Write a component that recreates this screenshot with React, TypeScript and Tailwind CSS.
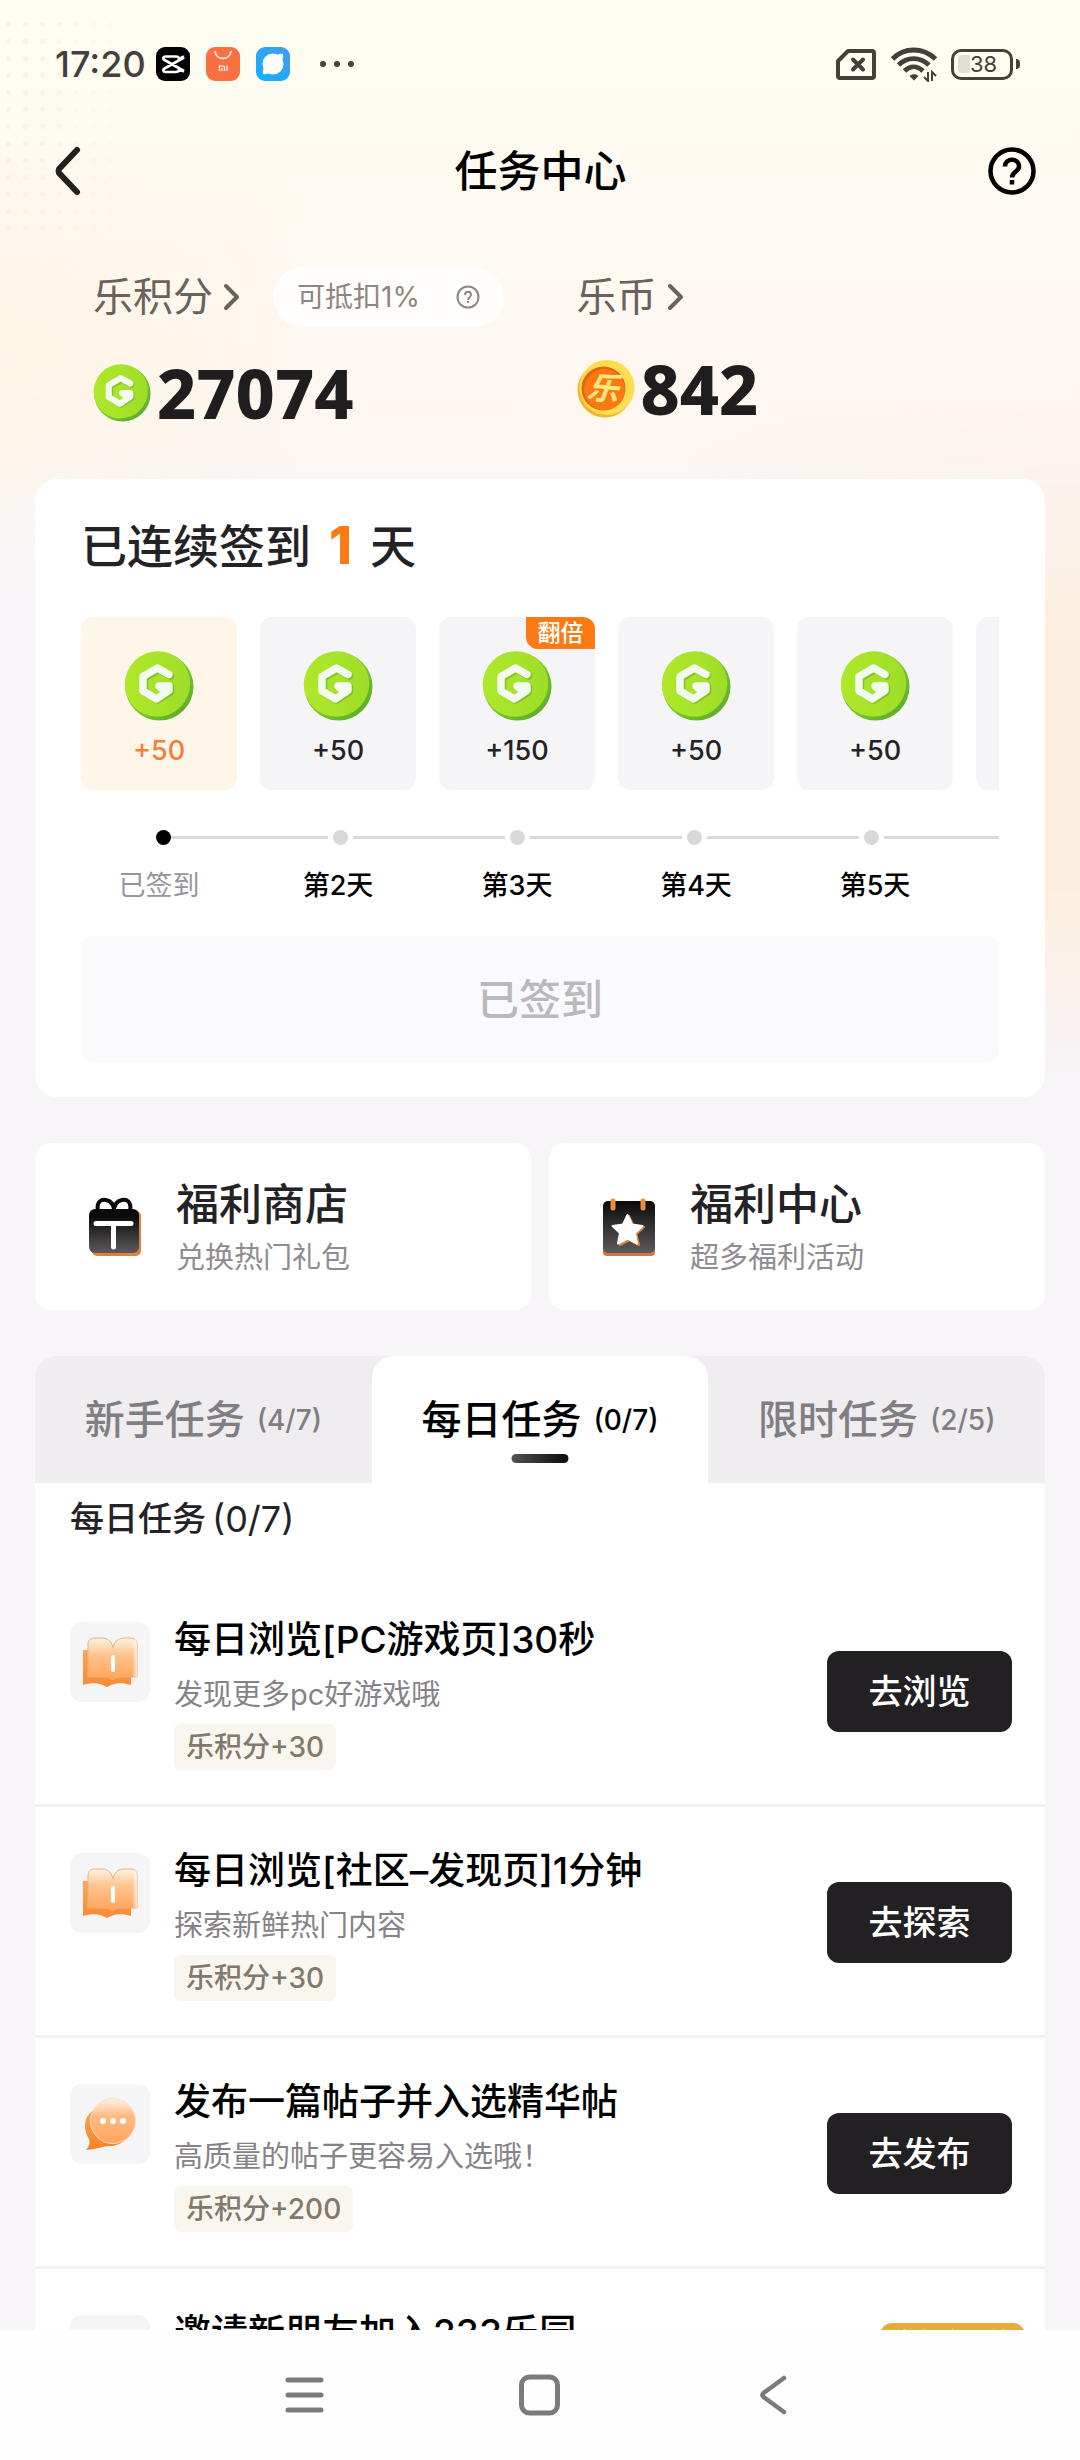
// Task center: point balances, the daily check-in strip, welfare shortcuts
// and the tabbed list of tasks, framed by the phone's status and nav bars.

import type { ReactNode } from 'react';

type TaskIcon = 'book' | 'chat' | 'none';

interface Task {
  icon: TaskIcon;
  title: string;
  blurb: string;
  reward: string;
  action: string;
}

const DAYS = [
  { label: '已签到', amount: '+50',  done: true,  double: false },
  { label: '第2天',  amount: '+50',  done: false, double: false },
  { label: '第3天',  amount: '+150', done: false, double: true },
  { label: '第4天',  amount: '+50',  done: false, double: false },
  { label: '第5天',  amount: '+50',  done: false, double: false },
];

const TABS = [
  { name: '新手任务', count: '(4/7)', active: false },
  { name: '每日任务', count: '(0/7)', active: true },
  { name: '限时任务', count: '(2/5)', active: false },
];

const TASKS: Task[] = [
  { icon: 'book', title: '每日浏览[PC游戏页]30秒',     blurb: '发现更多pc好游戏哦',         reward: '乐积分+30',  action: '去浏览' },
  { icon: 'book', title: '每日浏览[社区–发现页]1分钟', blurb: '探索新鲜热门内容',           reward: '乐积分+30',  action: '去探索' },
  { icon: 'chat', title: '发布一篇帖子并入选精华帖',   blurb: '高质量的帖子更容易入选哦！', reward: '乐积分+200', action: '去发布' },
];

function GreenCoin({ className }: { className: string }) {
  return (
    <svg viewBox="0 0 70 70" className={className} aria-hidden="true">
      <defs>
        <linearGradient id="coinSide" x1="0" y1="0" x2="1" y2="1">
          <stop offset="0.15" stopColor="#4a9420" />
          <stop offset="0.5" stopColor="#7cc82a" />
          <stop offset="0.85" stopColor="#5fb02c" />
          <stop offset="1" stopColor="#8ad848" />
        </linearGradient>
        <linearGradient id="coinFace" x1="0" y1="0" x2="1" y2="1">
          <stop offset="0" stopColor="#b2ea2a" />
          <stop offset="1" stopColor="#9bdc28" />
        </linearGradient>
      </defs>
      <circle cx="35.500" cy="35.500" r="34" fill="url(#coinSide)" />
      <ellipse cx="33.500" cy="33" rx="33" ry="32.500" fill="url(#coinFace)" transform="rotate(-45 33.500 33)" />
      <g fill="none" strokeWidth="7.500" strokeLinejoin="round" strokeLinecap="round">
        <path d="M46.500 25 L35 18.500 L20.500 27 V41 L33.500 49 L46.500 41 V36 H36.500 L38 38" stroke="#6fa821" opacity="0.6" />
        <path d="M45 23.500 L33.500 17 L19 25.500 V40 L32.500 48 L45 39.500 V35 H35 L37 37" stroke="#f3faf0" />
      </g>
    </svg>
  );
}

function GoldCoin() {
  return (
    <span className="relative flex h-[58px] w-[58px] items-center justify-center">
      <svg viewBox="0 0 58 58" className="absolute inset-0 h-full w-full" aria-hidden="true">
        <circle cx="28" cy="30" r="27.500" fill="#f3b52f" />
        <circle cx="30" cy="27.500" r="27.500" fill="#ffdc50" />
        <circle cx="26.500" cy="28.500" r="22" fill="#e2640c" />
        <circle cx="27.500" cy="29.500" r="20.500" fill="#fb7a10" />
      </svg>
      <span className="relative rotate-6 pr-1 text-[32px] leading-8 font-bold text-[#ffe384] italic">乐</span>
    </span>
  );
}

function Chevron() {
  return (
    <svg viewBox="0 0 18 28" className="h-7 w-[18px]" fill="none" stroke="currentColor" strokeWidth="4" strokeLinecap="round" strokeLinejoin="round" aria-hidden="true">
      <path d="M3 3 L14 14 L3 25" />
    </svg>
  );
}

function GiftIcon() {
  return (
    <svg viewBox="0 0 54 60" className="h-[60px] w-[54px]" aria-hidden="true">
      <defs>
        <linearGradient id="giftBody" x1="0" y1="0" x2="0" y2="1">
          <stop offset="0.15" stopColor="#0b0a0b" />
          <stop offset="1" stopColor="#5c5a5b" />
        </linearGradient>
      </defs>
      <rect x="4" y="14" width="49" height="45" rx="5" fill="#e0823c" />
      <path d="M10 14 C8 4 14 2 18 3 C23 4 26 8 26 14 C26 8 29 4 34 3 C38 2 44 4 42 14" fill="none" stroke="#0b0a0b" strokeWidth="4" />
      <rect x="1" y="12" width="50" height="44" rx="6" fill="url(#giftBody)" />
      <path d="M8 26.500 H43 M25.500 27 V50" stroke="#fff" strokeWidth="5" strokeLinecap="round" />
    </svg>
  );
}

function CalendarStarIcon() {
  return (
    <svg viewBox="0 0 54 60" className="h-[60px] w-[54px]" aria-hidden="true">
      <defs>
        <linearGradient id="calBody" x1="0" y1="0" x2="0" y2="1">
          <stop offset="0" stopColor="#0b0a0b" />
          <stop offset="1" stopColor="#5c5a5b" />
        </linearGradient>
      </defs>
      <rect x="1" y="12" width="52" height="47" rx="4" fill="#d27540" />
      <rect x="1" y="4" width="52" height="52" rx="5" fill="url(#calBody)" />
      <path d="M11 4 V11 M41 4 V11" stroke="#f08a3c" strokeWidth="5" strokeLinecap="round" />
      <path
        d="M27 19 L31.500 28.500 L42 30 L34.500 37 L37 48 L27.500 43 L18 48 L20 37 L12 30 L22 28.500 Z"
        fill="#e0823c" stroke="#e0823c" strokeWidth="2" strokeLinejoin="round"
      />
      <path
        d="M25.500 18 L30 27.500 L40.500 29 L33 36 L35 46.500 L25.500 41.500 L16 46.500 L18 36 L10.500 29 L21 27.500 Z"
        fill="#fff" stroke="#fff" strokeWidth="2" strokeLinejoin="round"
      />
    </svg>
  );
}

function BookIcon() {
  return (
    <svg viewBox="0 0 56 52" className="h-[52px] w-14" aria-hidden="true">
      <defs>
        <linearGradient id="bookBack" x1="0" y1="0" x2="0" y2="1">
          <stop offset="0" stopColor="#fda55a" />
          <stop offset="1" stopColor="#f98a35" />
        </linearGradient>
        <linearGradient id="bookFront" x1="0" y1="0" x2="0" y2="1">
          <stop offset="0" stopColor="#fff3e6" />
          <stop offset="0.4" stopColor="#ffc48f" />
          <stop offset="1" stopColor="#ffa357" />
        </linearGradient>
        <linearGradient id="bookEdge" x1="0" y1="0" x2="1" y2="0">
          <stop offset="0.8" stopColor="#fff" stopOpacity="0" />
          <stop offset="1" stopColor="#fff" stopOpacity="0.7" />
        </linearGradient>
      </defs>
      <path d="M1 14 H49 V49 C40 46 31 47 25 51 C19 47 10 46 1 49 Z" fill="url(#bookBack)" />
      <path
        d="M6 8 C6 4 9 2 13 2 H20 C26 2 30 6 31 12 C32 6 36 2 42 2 H48 C52 2 55 4 55 8 V41 H40 C36 41 33 42 31 44 C29 42 26 41 22 41 H6 Z"
        fill="url(#bookFront)" stroke="#e9b27e" strokeWidth="1"
      />
      <path d="M31 12 C32 6 36 2 42 2 H48 C52 2 55 4 55 8 V41 H40 C36 41 33 42 31 44 Z" fill="url(#bookEdge)" />
      <path d="M31 21 V34" stroke="#fff" strokeWidth="4" strokeLinecap="round" />
    </svg>
  );
}

function ChatIcon() {
  return (
    <svg viewBox="0 0 56 56" className="h-14 w-14" aria-hidden="true">
      <defs>
        <linearGradient id="chatBack" x1="0" y1="0" x2="0" y2="1">
          <stop offset="0" stopColor="#ffa65a" />
          <stop offset="1" stopColor="#f58128" />
        </linearGradient>
        <linearGradient id="chatFront" x1="0" y1="0" x2="0" y2="1">
          <stop offset="0" stopColor="#fff3e6" />
          <stop offset="0.4" stopColor="#ffba80" />
          <stop offset="1" stopColor="#ffa65e" />
        </linearGradient>
      </defs>
      <path d="M26 10 C40 10 49 19 49 30 C49 42 40 50 27 50 C20 50 17 53 4 54 C8 50 8 46 7 43 C4 38 3 34 3 30 C3 18 13 10 26 10 Z" fill="url(#chatBack)" />
      <circle cx="31" cy="25" r="22.500" fill="url(#chatFront)" stroke="#fde0c2" strokeWidth="1" />
      <g fill="#fff">
        <circle cx="21" cy="25" r="3" />
        <circle cx="31" cy="25" r="3" />
        <circle cx="41" cy="25" r="3" />
      </g>
    </svg>
  );
}

function StatusBar() {
  return (
    <div className="flex h-10 items-center justify-between pr-15 pl-[55px] text-[#45403a]">
      <div className="flex items-center">
        <span className="text-[36px] leading-10 font-medium">17:20</span>
        <div className="ml-2.5 flex items-center gap-4">
          <svg viewBox="0 0 34 34" className="h-[34px] w-[34px]" aria-hidden="true">
            <rect width="34" height="34" rx="9" fill="#000" />
            <path d="M28 9.500 L23 12 C23 10 22 9.500 20 9.500 H9.500 C7 9.500 6.500 12 8.500 13 L28 24 M28 24.500 L23 22 C23 24 22 25 20 25 H9.500 C7 25 6.500 22.500 8.500 21.500 L28 10.500" fill="none" stroke="#fff" strokeWidth="2.600" strokeLinejoin="round" />
          </svg>
          <svg viewBox="0 0 34 34" className="h-[34px] w-[34px]" aria-hidden="true">
            <rect width="34" height="34" rx="9" fill="#fb7040" />
            <path d="M9 4 C10 14 24 14 25 4" fill="none" stroke="#ffe9df" strokeWidth="1.800" />
            <path d="M13.500 24 V19 H17 Q18.500 19 18.500 20.500 V24 M21 18.500 V24 M16 21 V24" fill="none" stroke="#fff" strokeWidth="1.200" />
          </svg>
          <svg viewBox="0 0 34 34" className="h-[34px] w-[34px]" aria-hidden="true">
            <defs>
              <linearGradient id="browser" x1="1" y1="0" x2="0" y2="1">
                <stop offset="0" stopColor="#459bea" />
                <stop offset="1" stopColor="#12b0ff" />
              </linearGradient>
            </defs>
            <rect width="34" height="34" rx="9" fill="url(#browser)" />
            <circle cx="17" cy="17" r="10.500" fill="#fff" />
            <path d="M27 7 C25 6.500 23 7 21.500 7.800 L26.300 12.500 C27 11 27.500 9 27 7 Z M7 27 C9 27.500 11 27 12.500 26.300 L7.800 21.500 C7 23 6.500 25 7 27 Z" fill="#fff" />
          </svg>
        </div>
        <svg viewBox="0 0 36 8" className="ml-[29px] h-2 w-9" fill="currentColor" aria-hidden="true">
          <circle cx="4" cy="4" r="3" />
          <circle cx="18" cy="4" r="3" />
          <circle cx="32" cy="4" r="3" />
        </svg>
      </div>
      <div className="flex items-center gap-3.5">
        <svg viewBox="0 0 42 34" className="h-[34px] w-[42px]" fill="none" stroke="currentColor" strokeWidth="4" strokeLinejoin="round" aria-hidden="true">
          <path d="M13 4 H37 Q39 4 39 6 V29 Q39 31 37 31 H5 Q3 31 3 29 V14 Z" />
          <path d="M18 12.500 L28 22.500 M28 12.500 L18 22.500" strokeLinecap="round" />
        </svg>
        <svg viewBox="0 0 46 36" className="h-9 w-[46px]" fill="none" stroke="currentColor" strokeWidth="4.800" aria-hidden="true">
          <path d="M1.500 13 C13 1 32 1 44.500 13" />
          <path d="M7.500 19 C16 10.500 29 10.500 38 19" />
          <path d="M13.500 25 C19 19.500 26 19.500 32 25" />
          <path d="M18.500 30 C21 27.500 25 27.500 27.500 30 L23 34.500 Z" fill="currentColor" stroke="none" />
          <path d="M37 26 V35 L33 31 M41 35 V26 L45 30" strokeWidth="2" />
        </svg>
        <span className="flex items-center gap-[3px]">
          <span className="flex h-[31px] w-[62px] items-center rounded-[10px] border-[3px] border-current p-1">
            <span className="h-4.5 w-3 rounded-l-[4px] bg-[#e2ded6]" />
            <span className="text-[22px] leading-5 font-normal">38</span>
          </span>
          <span className="h-2.5 w-1 rounded-r-sm bg-current" />
        </span>
      </div>
    </div>
  );
}

function Balance({ name, coin, value, gap, children }: { name: string; coin: ReactNode; value: string; gap: string; children?: ReactNode }) {
  return (
    <div className={`flex flex-1 flex-col ${gap}`}>
      <div className="flex h-16 items-center">
        <a href="#detail" className="flex items-center gap-2.5 text-[40px] leading-[48px] text-[#6a625b]">
          {name}
          <Chevron />
        </a>
        {children}
      </div>
      <div className="flex h-16 items-center gap-1.5">
        {coin}
        <span className="font-['Noto_Sans','Noto_Sans_CJK_SC',sans-serif] text-[68px] leading-[64px] font-extrabold text-[#1f1d1d]">
          {value}
        </span>
      </div>
    </div>
  );
}

function CheckIn() {
  return (
    <section className="rounded-[22px] bg-white px-[46px] pt-[39px] pb-[35px]">
      <h2 className="flex h-14 items-center gap-[18px] text-[46px] font-medium text-[#252226]">
        已连续签到
        <strong className="text-[52px] font-extrabold text-[#fb7a14]">1</strong>
        天
      </h2>

      <div className="mt-[43px] overflow-hidden">
        <ol className="flex gap-[23px]">
          {DAYS.map(({ label, amount, done, double }) => (
            <li
              key={label}
              className={`relative flex h-[173px] w-[156px] shrink-0 flex-col items-center gap-3 rounded-xl pt-[34px] ${done ? 'bg-[#fef6e8]' : 'bg-[#f5f4f7]'}`}
            >
              <GreenCoin className="h-[70px] w-[70px]" />
              <span className={`text-[27px] leading-9 font-medium ${done ? 'text-[#f0803a]' : 'text-[#252226]'}`}>
                {amount}
              </span>
              {double && (
                <span className="absolute top-0 right-0 flex h-8 w-[69px] items-center justify-center rounded-tr-xl rounded-bl-xl bg-[#fb7a14] text-[23px] font-medium text-white">
                  翻倍
                </span>
              )}
            </li>
          ))}
          {/* next day peeks in at the right edge */}
          <li className="h-[173px] w-[156px] shrink-0 rounded-xl bg-[#f5f4f7]" />
        </ol>

        {/* Progress line */}
        <div className="mt-10 flex pl-[75px]" aria-hidden="true">
          {DAYS.map(({ label, done }) => (
            <span key={label} className="flex w-[177px] shrink-0 items-center">
              <span className={`h-[15px] w-[15px] rounded-full ${done ? 'bg-black' : 'bg-[#d9d7da]'}`} />
              <span className={`mr-[5px] h-[3px] flex-1 bg-[#dad8db] ${done ? '' : 'ml-[5px]'}`} />
            </span>
          ))}
        </div>

        <div className="mt-[25px] flex gap-[23px]">
          {DAYS.map(({ label, done }) => (
            <span
              key={label}
              className={`w-[156px] shrink-0 text-center text-[27px] leading-8 ${done ? 'text-[#98969a]' : 'font-medium text-black'}`}
            >
              {label}
            </span>
          ))}
        </div>
      </div>

      <button type="button" disabled className="mt-[34px] h-[126px] w-full rounded-xl bg-[#faf9fb] text-[42px] font-medium text-[#bab8bc]">
        已签到
      </button>
    </section>
  );
}

function WelfareLink({ icon, name, blurb }: { icon: ReactNode; name: string; blurb: string }) {
  return (
    <a href="#welfare" className="flex flex-1 items-center gap-[34px] rounded-2xl bg-white pt-[37px] pb-9 pl-[53px]">
      {icon}
      <span className="flex flex-col gap-3.5">
        <span className="text-[43px] leading-[48px] font-medium text-[#252226]">{name}</span>
        <span className="text-[29px] leading-8 text-[#8e8c90]">{blurb}</span>
      </span>
    </a>
  );
}

function TaskTile({ icon }: { icon: TaskIcon }) {
  return (
    <span className="mt-1.5 flex h-20 w-20 shrink-0 items-center justify-center rounded-xl bg-[#f5f4f7]">
      {icon === 'book' && <BookIcon />}
      {icon === 'chat' && <ChatIcon />}
    </span>
  );
}

export default function App() {
  return (
    <div className="flex h-screen flex-col bg-white font-['Inter','Noto_Sans_CJK_SC',sans-serif]">
      <main className="relative min-h-0 flex-1 overflow-hidden bg-[#f7f5f8]">
        <div className="absolute inset-x-0 top-0 h-[1080px] bg-[linear-gradient(to_bottom,#fffdf1_0%,#fef9f1_22%,#fdf7f0_38%,#f9f6f6_50%,#f7f5f8_58%)]" />
        <div className="absolute top-[400px] right-0 h-[680px] w-[400px] bg-[linear-gradient(to_bottom,transparent,#fceedf_35%,#fceedf_72%,transparent)] mask-l-from-10%" />
        <div className="absolute top-[160px] left-0 h-[380px] w-[300px] bg-[linear-gradient(to_bottom,transparent,#fff4e5_50%,transparent)] mask-r-from-0%" />
        <div className="absolute top-4 left-0 h-[220px] w-[140px] bg-[radial-gradient(#f9f2e6_2px,transparent_3px)] bg-[length:17px_17px] mask-r-from-20%" />

        <div className="relative pt-11">
          <StatusBar />

          <header className="mt-[57px] flex h-[60px] items-center justify-between pr-11 pl-[53px]">
            <button type="button" aria-label="返回" className="flex w-10 text-[#24211c]">
              <svg viewBox="0 0 30 52" className="h-[52px] w-[30px]" fill="none" stroke="currentColor" strokeWidth="6" strokeLinecap="round" strokeLinejoin="round">
                <path d="M24 5 L6 24 Q5 26 6 28 L24 47" />
              </svg>
            </button>
            <h1 className="text-[43px] leading-[60px] font-medium text-black">任务中心</h1>
            <button type="button" aria-label="帮助" className="flex text-black">
              <svg viewBox="0 0 48 48" className="h-12 w-12" fill="none" stroke="currentColor" strokeWidth="4.500">
                <circle cx="24" cy="24" r="21.500" />
                <path d="M17 19.500 C17 10.500 31 10.500 31 19.500 C31 24.500 24 24.500 24 30.500" />
                <path d="M24 33 V37.500" />
              </svg>
            </button>
          </header>

          {/* Balances */}
          <section className="mt-16 flex pr-5 pl-[93px]">
            <Balance name="乐积分" coin={<GreenCoin className="h-[58px] w-[58px]" />} value="27074" gap="gap-8">
              <span className="ml-8 flex h-[60px] items-center gap-9 rounded-full bg-white/80 pr-6 pl-6 text-[28px] whitespace-nowrap text-[#8f867f]">
                可抵扣1%
                <svg viewBox="0 0 24 24" className="h-6 w-6" fill="none" stroke="currentColor" strokeWidth="2" aria-hidden="true">
                  <circle cx="12" cy="12" r="10.500" />
                  <path d="M9 10 C9 5.500 15 5.500 15 10 C15 12 12 12 12 15 M12 16 V18" />
                </svg>
              </span>
            </Balance>
            <Balance name="乐币" coin={<GoldCoin />} value="842" gap="gap-7" />
          </section>

          <div className="mt-[54px] flex flex-col gap-[46px] px-[35px]">
            <CheckIn />

            <div className="flex gap-[18px]">
              <WelfareLink icon={<GiftIcon />} name="福利商店" blurb="兑换热门礼包" />
              <WelfareLink icon={<CalendarStarIcon />} name="福利中心" blurb="超多福利活动" />
            </div>

            <section>
              {/* Tabs */}
              <div role="tablist" className="flex rounded-t-[22px] bg-[#efedf0]">
                {TABS.map(({ name, count, active }) => (
                  <button
                    key={name}
                    type="button"
                    role="tab"
                    aria-selected={active}
                    className={`relative flex h-[127px] flex-1 items-center justify-center gap-3 ${active ? 'rounded-t-[22px] bg-white text-black' : 'text-[#807e82]'}`}
                  >
                    <span className="text-[40px] font-medium">{name}</span>
                    <span className="text-[28px] font-medium">{count}</span>
                    {active && (
                      <span className="absolute bottom-5 left-1/2 h-[9px] w-[57px] -translate-x-1/2 rounded-full bg-linear-to-r from-[#555356] to-[#0c0b0d]" />
                    )}
                  </button>
                ))}
              </div>

              <div className="bg-white pt-4">
                <h3 className="mb-[37px] flex gap-1.5 pl-[35px] text-[34px] leading-10 font-medium text-[#252226]">
                  每日任务
                  <span className="text-[36px] font-normal">(0/7)</span>
                </h3>
                <ul>
                  {TASKS.map(({ icon, title, blurb, reward, action }) => (
                    <li key={title} className="flex gap-6 border-b-[3px] border-[#f2f0f3] pt-10 pr-[33px] pb-[34px] pl-[35px]">
                      <TaskTile icon={icon} />
                      <div className="flex min-w-0 flex-1 flex-col items-start">
                        <h4 className="text-[37px] leading-[48px] font-medium whitespace-nowrap text-black">{title}</h4>
                        <p className="mt-[13px] text-[29px] leading-9 text-[#858387]">{blurb}</p>
                        <span className="mt-[11px] flex h-[46px] items-center rounded-md bg-[#f9f6f0] px-3 text-[28px] font-medium text-[#82786b]">
                          {reward}
                        </span>
                      </div>
                      <button type="button" className="mb-1 h-[81px] w-[185px] self-center rounded-xl bg-[#232024] text-[34px] font-medium text-white">
                        {action}
                      </button>
                    </li>
                  ))}
                  <li className="flex gap-6 pt-10 pr-5 pb-[34px] pl-[35px]">
                    <TaskTile icon="none" />
                    <h4 className="flex-1 text-[37px] leading-[48px] font-medium text-black">邀请新朋友加入233乐园</h4>
                    <span className="mt-3.5 h-10 w-[145px] rounded-t-xl bg-[#e8aa38] text-center text-[23px] leading-9 font-medium text-white">
                      有机会可兑
                    </span>
                  </li>
                </ul>
              </div>
            </section>
          </div>
        </div>
      </main>

      {/* System navigation */}
      <nav className="flex h-[130px] shrink-0 items-center justify-center gap-[187px] bg-[#fefefe] text-[#7c7a7e]">
        <button type="button" aria-label="最近任务">
          <svg viewBox="0 0 48 48" className="h-12 w-12" stroke="currentColor" strokeWidth="5" strokeLinecap="round">
            <path d="M7 9 H40 M7 24 H40 M7 39 H40" />
          </svg>
        </button>
        <button type="button" aria-label="主页">
          <svg viewBox="0 0 48 48" className="h-12 w-12" fill="none" stroke="currentColor" strokeWidth="5">
            <rect x="5.500" y="6" width="36" height="36" rx="8" />
          </svg>
        </button>
        <button type="button" aria-label="返回上一页">
          <svg viewBox="0 0 48 48" className="h-12 w-12" fill="none" stroke="currentColor" strokeWidth="4.500" strokeLinecap="round" strokeLinejoin="round">
            <path d="M33 7 L12.500 22 Q10.500 24 12.500 26 L33 41" />
          </svg>
        </button>
      </nav>
    </div>
  );
}
